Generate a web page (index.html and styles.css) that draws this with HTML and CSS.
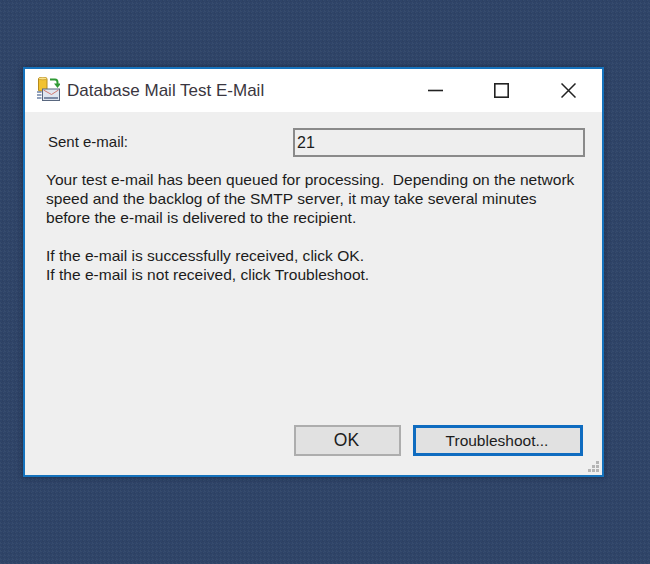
FILE: index.html
```html
<!DOCTYPE html>
<html lang="en">
<head>
<meta charset="utf-8">
<title>Database Mail Test E-Mail</title>
<link rel="stylesheet" href="styles.css">
</head>
<body>
<div class="window">
  <header class="titlebar">
    <svg class="app-icon" width="24" height="24" viewBox="0 0 24 24">
      <rect x="2.500" y="1" width="8.500" height="13" rx="1" fill="#f2c230" stroke="#b58a1c"/>
      <ellipse cx="6.750" cy="1.500" rx="4.200" ry="1.300" fill="#fbe38a" stroke="#b58a1c" stroke-width=".6"/>
      <path d="M14 2.500h5q2.500 0 2.500 3v1.500" fill="none" stroke="#2f9a35" stroke-width="2"/>
      <path d="M18 6.500h7l-3.500 4.500z" fill="#2f9a35"/>
      <rect x="6.500" y="12" width="17" height="11.500" fill="#dfe6f0" stroke="#59677f"/>
      <path d="M7.500 13l8 4.500 7-4.500" fill="none" stroke="#d2796f"/>
      <path d="M8 21h14" stroke="#7d8ba5" stroke-width="2"/>
      <path d="M1 15h4.500M1 18h4.500M1 21h4.500" stroke="#6f84a8" stroke-width="1.500"/>
    </svg>
    <span class="title">Database Mail Test E-Mail</span>
    <div class="controls">
      <svg class="ctl" width="15" height="15" viewBox="0 0 15 15"><path d="M0 7.500h15" stroke="#222" stroke-width="1.600"/></svg>
      <svg class="ctl" width="15" height="15" viewBox="0 0 15 15"><rect x=".8" y=".8" width="13.400" height="13.400" fill="none" stroke="#222" stroke-width="1.600"/></svg>
      <svg class="ctl ctl-close" width="15" height="15" viewBox="0 0 15 15"><path d="M.5 .5l14 14M14.500 .5l-14 14" stroke="#222" stroke-width="1.500"/></svg>
    </div>
  </header>
  <main class="content">
    <div class="sent-row">
      <label class="sent-label">Sent e-mail:</label>
      <div class="sent-value">21</div>
    </div>
    <p class="message">Your test e-mail has been queued for processing.  Depending on the network
speed and the backlog of the SMTP server, it may take several minutes
before the e-mail is delivered to the recipient.</p>
    <p class="message second">If the e-mail is successfully received, click OK.
If the e-mail is not received, click Troubleshoot.</p>
    <div class="actions">
      <button class="btn btn-ok">OK</button>
      <button class="btn btn-default">Troubleshoot...</button>
    </div>
  </main>
  <svg class="grip" width="12" height="12" viewBox="0 0 12 12"><path d="M8 0h3v3H8zM4 4h3v3H4zM8 4h3v3H8zM0 8h3v3H0zM4 8h3v3H4zM8 8h3v3H8z" fill="#b4b4b4"/></svg>
</div>
</body>
</html>
```
FILE: styles.css
```css
* { box-sizing: border-box; }
html, body { margin: 0; height: 100%; }
body {
  padding: 67px 0 0 23px;
  overflow: hidden;
  background-color: #2f4468;
  background-image:
    linear-gradient(45deg, rgba(255,255,255,.035) 25%, transparent 25%, transparent 75%, rgba(255,255,255,.035) 75%),
    linear-gradient(45deg, rgba(0,0,0,.05) 25%, transparent 25%, transparent 75%, rgba(0,0,0,.05) 75%);
  background-size: 4px 4px, 4px 4px;
  background-position: 0 0, 2px 2px;
  font-family: "Liberation Sans", Arial, sans-serif;
  color: #1c1c1c;
}
.window {
  position: relative;
  width: 581px;
  height: 410px;
  border: 2px solid #1673bd;
  background: #efefef;
  display: flex;
  flex-direction: column;
  box-shadow: 0 0 6px rgba(10,20,40,.45);
}
.titlebar {
  height: 43px;
  flex: none;
  background: #fff;
  display: flex;
  align-items: center;
  padding-left: 11px;
}
.app-icon { flex: none; margin-top: -4px; }
.title { margin-left: 7px; font-size: 17px; color: #3a3640; }
.controls {
  margin-left: auto;
  display: flex;
  gap: 51px;
  padding-right: 26px;
}
.ctl-close { margin-left: 1px; }
.content {
  flex: 1;
  display: flex;
  flex-direction: column;
  padding: 16px 17px 19px 21px;
}
.sent-row { display: flex; align-items: center; }
.sent-label { width: 247px; padding: 0 0 2px 2px; font-size: 15px; }
.sent-value {
  width: 292px;
  height: 29px;
  border: 2px solid #8a8a8a;
  background: #eeeeee;
  padding-left: 2px;
  font-size: 16px;
  line-height: 25px;
}
.message {
  margin: 13px 0 0;
  font-size: 15.55px;
  line-height: 19px;
  white-space: pre;
}
.message.second { margin-top: 19px; }
.actions {
  margin-top: auto;
  display: flex;
  justify-content: flex-end;
  gap: 12px;
  padding-right: 2px;
}
.btn {
  height: 31px;
  font: 15.5px/1 "Liberation Sans", Arial, sans-serif;
  color: #1c1c1c;
  background: #e1e1e1;
  padding: 0 2px 0 0;
}
.btn-ok { width: 107px; border: 2px solid #adadad; font-size: 17.5px; }
.btn-default { width: 170px; border: 3px solid #0f6cc0; }
.grip { position: absolute; right: 2px; bottom: 2px; }
```
